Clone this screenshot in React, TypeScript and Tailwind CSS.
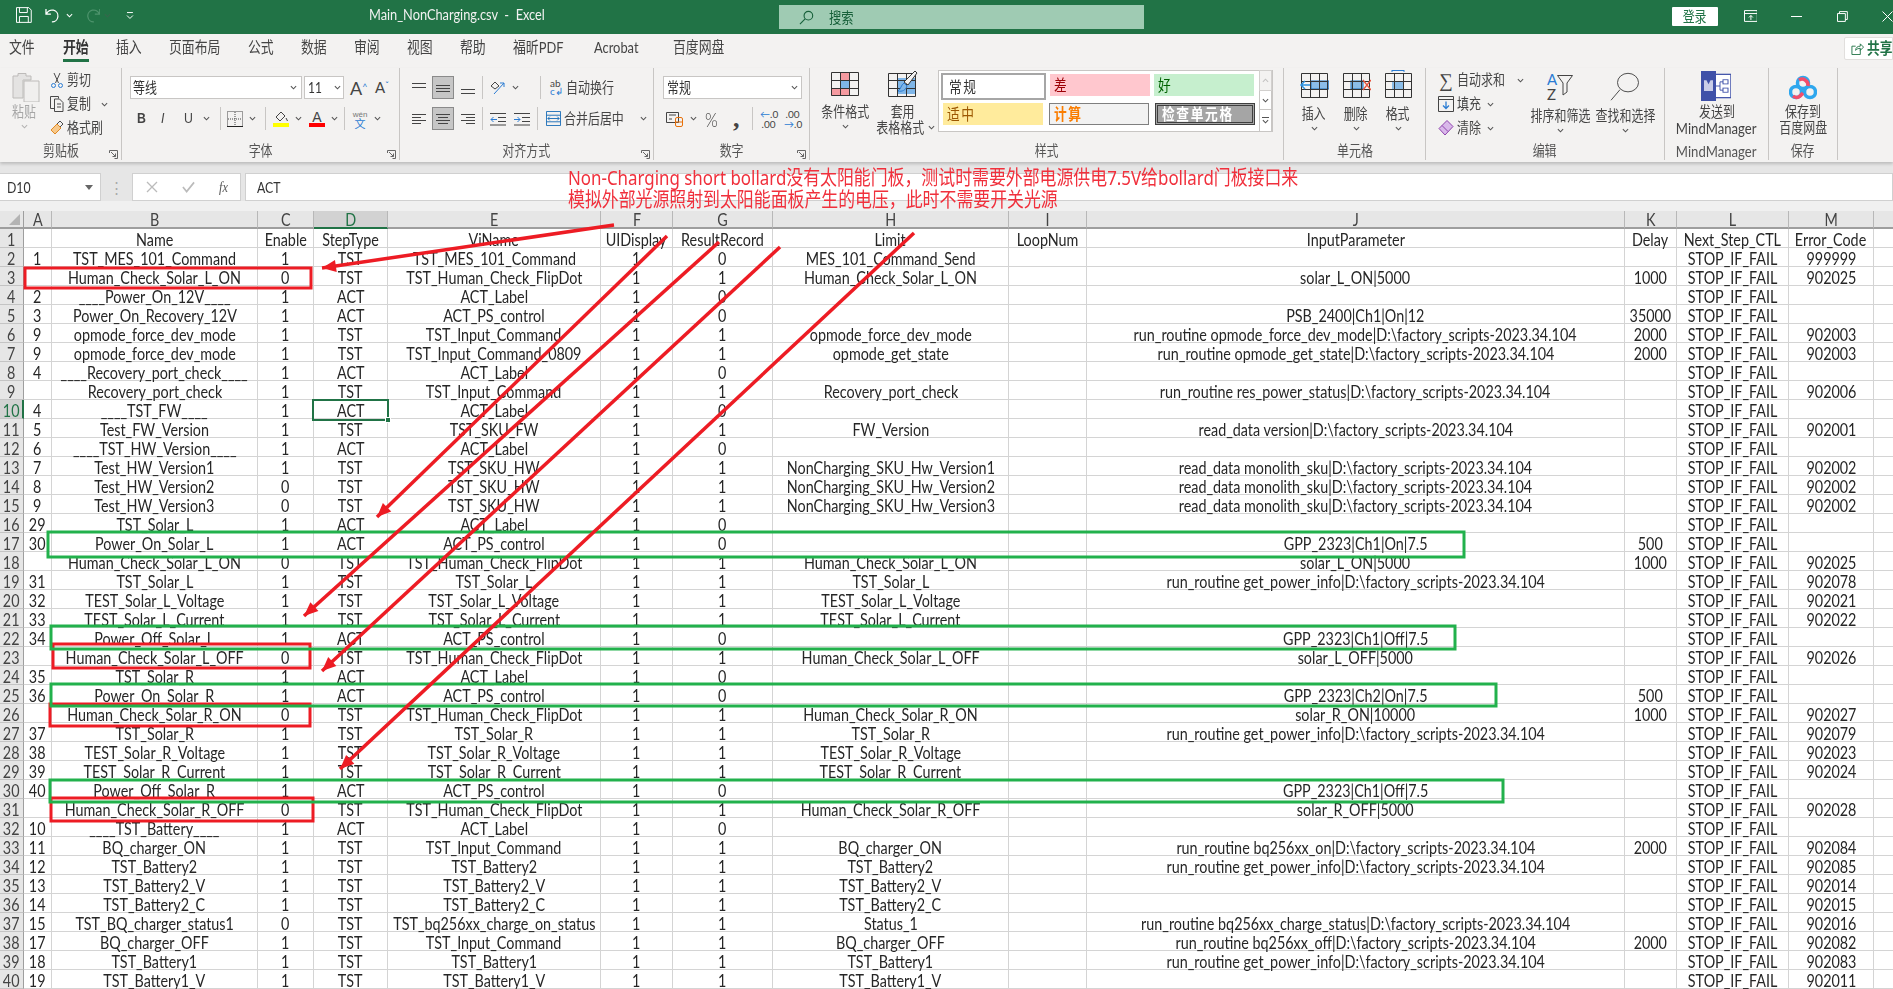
// App.tsx
import React from "react";

const COLS = "grid grid-cols-[24px_28px_206px_56px_74px_213px_72px_100px_236px_78px_538px_52px_112px_85px_19px]";
const STOP = "STOP_IF_FAIL";
const D = "|D:\\factory_scripts-2023.34.104";

// A..M of rows 2-40, "" where the cell is empty
const rows: string[][] = [
  ["1", "TST_MES_101_Command", "1", "TST", "TST_MES_101_Command", "1", "0", "MES_101_Command_Send", "", "", "", STOP, "999999"],
  ["", "Human_Check_Solar_L_ON", "0", "TST", "TST_Human_Check_FlipDot", "1", "1", "Human_Check_Solar_L_ON", "", "solar_L_ON|5000", "1000", STOP, "902025"],
  ["2", "____Power_On_12V____", "1", "ACT", "ACT_Label", "1", "0", "", "", "", "", STOP, ""],
  ["3", "Power_On_Recovery_12V", "1", "ACT", "ACT_PS_control", "1", "0", "", "", "PSB_2400|Ch1|On|12", "35000", STOP, ""],
  ["9", "opmode_force_dev_mode", "1", "TST", "TST_Input_Command", "1", "1", "opmode_force_dev_mode", "", "run_routine opmode_force_dev_mode" + D, "2000", STOP, "902003"],
  ["9", "opmode_force_dev_mode", "1", "TST", "TST_Input_Command_0809", "1", "1", "opmode_get_state", "", "run_routine opmode_get_state" + D, "2000", STOP, "902003"],
  ["4", "____Recovery_port_check____", "1", "ACT", "ACT_Label", "1", "0", "", "", "", "", STOP, ""],
  ["", "Recovery_port_check", "1", "TST", "TST_Input_Command", "1", "1", "Recovery_port_check", "", "run_routine res_power_status" + D, "", STOP, "902006"],
  ["4", "____TST_FW____", "1", "ACT", "ACT_Label", "1", "0", "", "", "", "", STOP, ""],
  ["5", "Test_FW_Version", "1", "TST", "TST_SKU_FW", "1", "1", "FW_Version", "", "read_data version" + D, "", STOP, "902001"],
  ["6", "____TST_HW_Version____", "1", "ACT", "ACT_Label", "1", "0", "", "", "", "", STOP, ""],
  ["7", "Test_HW_Version1", "1", "TST", "TST_SKU_HW", "1", "1", "NonCharging_SKU_Hw_Version1", "", "read_data monolith_sku" + D, "", STOP, "902002"],
  ["8", "Test_HW_Version2", "0", "TST", "TST_SKU_HW", "1", "1", "NonCharging_SKU_Hw_Version2", "", "read_data monolith_sku" + D, "", STOP, "902002"],
  ["9", "Test_HW_Version3", "0", "TST", "TST_SKU_HW", "1", "1", "NonCharging_SKU_Hw_Version3", "", "read_data monolith_sku" + D, "", STOP, "902002"],
  ["29", "TST_Solar_L", "1", "ACT", "ACT_Label", "1", "0", "", "", "", "", STOP, ""],
  ["30", "Power_On_Solar_L", "1", "ACT", "ACT_PS_control", "1", "0", "", "", "GPP_2323|Ch1|On|7.5", "500", STOP, ""],
  ["", "Human_Check_Solar_L_ON", "0", "TST", "TST_Human_Check_FlipDot", "1", "1", "Human_Check_Solar_L_ON", "", "solar_L_ON|5000", "1000", STOP, "902025"],
  ["31", "TST_Solar_L", "1", "TST", "TST_Solar_L", "1", "1", "TST_Solar_L", "", "run_routine get_power_info" + D, "", STOP, "902078"],
  ["32", "TEST_Solar_L_Voltage", "1", "TST", "TST_Solar_L_Voltage", "1", "1", "TEST_Solar_L_Voltage", "", "", "", STOP, "902021"],
  ["33", "TEST_Solar_L_Current", "1", "TST", "TST_Solar_L_Current", "1", "1", "TEST_Solar_L_Current", "", "", "", STOP, "902022"],
  ["34", "Power_Off_Solar_L", "1", "ACT", "ACT_PS_control", "1", "0", "", "", "GPP_2323|Ch1|Off|7.5", "", STOP, ""],
  ["", "Human_Check_Solar_L_OFF", "0", "TST", "TST_Human_Check_FlipDot", "1", "1", "Human_Check_Solar_L_OFF", "", "solar_L_OFF|5000", "", STOP, "902026"],
  ["35", "TST_Solar_R", "1", "ACT", "ACT_Label", "1", "0", "", "", "", "", STOP, ""],
  ["36", "Power_On_Solar_R", "1", "ACT", "ACT_PS_control", "1", "0", "", "", "GPP_2323|Ch2|On|7.5", "500", STOP, ""],
  ["", "Human_Check_Solar_R_ON", "0", "TST", "TST_Human_Check_FlipDot", "1", "1", "Human_Check_Solar_R_ON", "", "solar_R_ON|10000", "1000", STOP, "902027"],
  ["37", "TST_Solar_R", "1", "TST", "TST_Solar_R", "1", "1", "TST_Solar_R", "", "run_routine get_power_info" + D, "", STOP, "902079"],
  ["38", "TEST_Solar_R_Voltage", "1", "TST", "TST_Solar_R_Voltage", "1", "1", "TEST_Solar_R_Voltage", "", "", "", STOP, "902023"],
  ["39", "TEST_Solar_R_Current", "1", "TST", "TST_Solar_R_Current", "1", "1", "TEST_Solar_R_Current", "", "", "", STOP, "902024"],
  ["40", "Power_Off_Solar_R", "1", "ACT", "ACT_PS_control", "1", "0", "", "", "GPP_2323|Ch1|Off|7.5", "", STOP, ""],
  ["", "Human_Check_Solar_R_OFF", "0", "TST", "TST_Human_Check_FlipDot", "1", "1", "Human_Check_Solar_R_OFF", "", "solar_R_OFF|5000", "", STOP, "902028"],
  ["10", "____TST_Battery____", "1", "ACT", "ACT_Label", "1", "0", "", "", "", "", STOP, ""],
  ["11", "BQ_charger_ON", "1", "TST", "TST_Input_Command", "1", "1", "BQ_charger_ON", "", "run_routine bq256xx_on" + D, "2000", STOP, "902084"],
  ["12", "TST_Battery2", "1", "TST", "TST_Battery2", "1", "1", "TST_Battery2", "", "run_routine get_power_info" + D, "", STOP, "902085"],
  ["13", "TST_Battery2_V", "1", "TST", "TST_Battery2_V", "1", "1", "TST_Battery2_V", "", "", "", STOP, "902014"],
  ["14", "TST_Battery2_C", "1", "TST", "TST_Battery2_C", "1", "1", "TST_Battery2_C", "", "", "", STOP, "902015"],
  ["15", "TST_BQ_charger_status1", "0", "TST", "TST_bq256xx_charge_on_status", "1", "1", "Status_1", "", "run_routine bq256xx_charge_status" + D, "", STOP, "902016"],
  ["17", "BQ_charger_OFF", "1", "TST", "TST_Input_Command", "1", "1", "BQ_charger_OFF", "", "run_routine bq256xx_off" + D, "2000", STOP, "902082"],
  ["18", "TST_Battery1", "1", "TST", "TST_Battery1", "1", "1", "TST_Battery1", "", "run_routine get_power_info" + D, "", STOP, "902083"],
  ["19", "TST_Battery1_V", "1", "TST", "TST_Battery1_V", "1", "1", "TST_Battery1_V", "", "", "", STOP, "902011"],
];

const headRow = ["", "Name", "Enable", "StepType", "ViName", "UIDisplay", "ResultRecord", "Limit", "LoopNum", "InputParameter", "Delay", "Next_Step_CTL", "Error_Code"];

// the whole capture is squeezed sideways, so text is narrowed the same way
const T = ({ children, className = "" }: { children?: React.ReactNode; className?: string }) => (
  <span className={`inline-block whitespace-nowrap scale-x-[0.82] ${className}`}>{children}</span>
);
const L = ({ children, className = "" }: { children?: React.ReactNode; className?: string }) => (
  <T className={`origin-left ${className}`}>{children}</T>
);

const Chev = ({ className = "" }: { className?: string }) => (
  <svg viewBox="0 0 8 5" className={`w-[7px] h-[5px] shrink-0 ${className}`} fill="none" stroke="#555" strokeWidth="1.2">
    <path d="M1 1l3 3 3-3" />
  </svg>
);
const Sep = ({ className = "" }: { className?: string }) => <div className={`w-px h-[23px] bg-[#c8c6c4] shrink-0 ${className}`} />;

const Lines = ({ l }: { l: number[][] }) => (
  <svg viewBox="0 0 16 16" className="w-[16px] h-[16px] shrink-0" stroke="#444" strokeWidth="1" fill="none">
    {l.map((p, i) => (
      <path key={i} d={`M${p[0]} ${p[2]}.5H${p[1]}`} />
    ))}
  </svg>
);
const Pressed = ({ children, className = "" }: { children: React.ReactNode; className?: string }) => (
  <div className={`w-[22px] h-[23px] bg-[#c6c6c6] border border-[#8a8a8a] flex items-center justify-center shrink-0 ${className}`}>{children}</div>
);

const Group = ({ className, label, launcher, labelClass = "text-[14.6px]", children }: { className: string; label: string; launcher?: boolean; labelClass?: string; children: React.ReactNode }) => (
  <div className={`relative flex flex-col h-[92px] shrink-0 border-r border-[#c8c6c4] ${className}`}>
    <div className="h-[74px] flex flex-col">{children}</div>
    <div className={`h-[18px] mt-px flex items-center justify-center text-[#555] ${labelClass}`}>
      <T>{label}</T>
    </div>
    {launcher && (
      <svg viewBox="0 0 9 9" className="absolute right-[3px] bottom-[1px] w-[9px] h-[9px]" fill="none" stroke="#666" strokeWidth="1">
        <path d="M.5 3V.5H8.5V8.5H5.5M2 2l4.5 4.5M6.5 3.5v3h-3" />
      </svg>
    )}
  </div>
);

const Big = ({ className, lines, chev, children }: { className: string; lines: string[]; chev?: boolean; children: React.ReactNode }) => (
  <div className={`flex flex-col items-center shrink-0 ${className}`}>
    <div className="h-[30px] mb-[5px] flex items-end justify-center">{children}</div>
    {lines.map((s) => (
      <div key={s} className="h-[15px] mt-px leading-[15px] text-[14.6px] text-[#444] flex justify-center">
        <T>{s}</T>
      </div>
    ))}
    {chev && (
      <div className="h-[14px] flex items-center">
        <Chev />
      </div>
    )}
  </div>
);

const Grid3 = ({ cells, frame = "#333" }: { cells?: React.ReactNode; frame?: string }) => (
  <svg viewBox="0 0 28 24" className="w-[28px] h-[24px] mb-[2px]" fill="none">
    {cells}
    <path d="M.5.5h27v23H.5zM.5 8.5h27M.5 16.5h27M9.5.5v23M18.5.5v23" stroke={frame} strokeWidth="1" />
  </svg>
);

const StyleCell = ({ className, children }: { className: string; children: string }) => (
  <div className={`w-[100px] h-[22px] flex items-center pl-[4px] text-[15.5px] shrink-0 ${className}`}>
    <L>{children}</L>
  </div>
);

const tabs: [string, string][] = [
  ["文件", "ml-[9px]"],
  ["开始", "ml-[28px]"],
  ["插入", "ml-[27px]"],
  ["页面布局", "ml-[27px]"],
  ["公式", "ml-[27px]"],
  ["数据", "ml-[27px]"],
  ["审阅", "ml-[27px]"],
  ["视图", "ml-[27px]"],
  ["帮助", "ml-[27px]"],
  ["福昕PDF", "ml-[27px]"],
  ["Acrobat", "ml-[30px]"],
  ["百度网盘", "ml-[30px]"],
];
const tabWidths = ["w-[26px]", "w-[26px]", "w-[26px]", "w-[52px]", "w-[26px]", "w-[26px]", "w-[26px]", "w-[26px]", "w-[26px]", "w-[51px]", "w-[49px]", "w-[52px]"];

const TitleBar = () => (
  <div className="h-[34px] bg-[#217346] flex items-center text-white shrink-0 pb-[4px]">
    <svg viewBox="0 0 16 16" className="w-[16px] h-[16px] ml-[16px]" fill="none" stroke="#fff" strokeWidth="1">
      <path d="M.5.5h12.5l2.5 2.5v12.5H.5zM3.5.5v5h8v-5M3.5 15.5v-6h9v6" />
    </svg>
    <svg viewBox="0 0 16 16" className="w-[16px] h-[16px] ml-[13px]" fill="none" stroke="#fff" strokeWidth="1.3">
      <path d="M1 2v5h5M1.5 7A6 6 0 1 1 7 15" />
    </svg>
    <Chev className="ml-[5px] brightness-[4]" />
    <svg viewBox="0 0 16 16" className="w-[16px] h-[16px] ml-[12px] opacity-40" fill="none" stroke="#8fc3a5" strokeWidth="1.3">
      <path d="M15 2v5h-5M14.5 7A6 6 0 1 0 9 15" />
    </svg>
    <Chev className="ml-[4px] opacity-40" />
    <svg viewBox="0 0 8 9" className="w-[8px] h-[9px] ml-[15px]" fill="none" stroke="#fff">
      <path d="M1 1.5h6M1 4.5l3 3 3-3" />
    </svg>
    <div className="ml-[235px] w-[183px] text-[15.6px] font-[Lato,sans-serif] text-[#f2f2f2]">
      <L>Main_NonCharging.csv&nbsp; -&nbsp; Excel</L>
    </div>
    <div className="ml-[227px] mt-[4px] w-[371px] h-[24px] bg-[#9fcbb3] flex items-center text-[15px] text-[#17603a]">
      <svg viewBox="0 0 16 16" className="w-[15px] h-[15px] ml-[20px]" fill="none" stroke="#17603a" strokeWidth="1.2">
        <circle cx="10" cy="6" r="4.6" />
        <path d="M6.5 9.5L1 15" />
      </svg>
      <div className="ml-[15px]">
        <L>搜索</L>
      </div>
    </div>
    <div className="ml-[528px] mt-[3px] w-[46px] h-[19px] bg-white rounded-[1px] flex items-center justify-center text-[14.6px] text-[#217346]">
      <T>登录</T>
    </div>
    <svg viewBox="0 0 14 12" className="w-[14px] h-[12px] ml-[26px] mt-[2px]" fill="none" stroke="#fff">
      <path d="M.5.5h13v11H.5zM.5 3.5h13M7 10V5.5M5 7.5l2-2 2 2" />
    </svg>
    <div className="w-[11px] h-px bg-white ml-[34px] mt-[2px]" />
    <svg viewBox="0 0 11 11" className="w-[11px] h-[11px] ml-[35px] mt-[2px]" fill="none" stroke="#fff">
      <path d="M.5 2.5h8v8h-8zM2.5 2.5v-2h8v8h-2" />
    </svg>
    <svg viewBox="0 0 11 11" className="w-[11px] h-[11px] ml-[34px] mt-[2px] shrink-0" fill="none" stroke="#fff">
      <path d="M.5.5l10 10M10.5.5l-10 10" />
    </svg>
  </div>
);

const Tabs = () => (
  <div className="h-[34px] bg-[#f3f2f1] flex items-center relative shrink-0 text-[15.7px] text-[#444] pb-[6px]">
    {tabs.map(([t, ml], i) => (
      <div key={t} className={`relative h-full flex items-center shrink-0 ${ml} ${tabWidths[i]}`}>
        <L className={i === 1 ? "font-bold text-[#333]" : ""}>{t}</L>
        {i === 1 && <div className="absolute left-0 right-0 bottom-0 h-[3px] bg-[#217346]" />}
      </div>
    ))}
    <div className="absolute right-0 top-[3px] w-[49px] h-[23px] bg-white border border-[#e1dfdd] flex items-center pl-[6px] rounded-l-[2px]">
      <svg viewBox="0 0 14 14" className="w-[13px] h-[13px] shrink-0" fill="none" stroke="#217346">
        <path d="M10 8v5.5H1V4.5h4M5 9c0-3 2-4.500 5-4.500V2l3.500 3.500L10 9V6.800C8 6.800 6 7.500 5 9z" />
      </svg>
      <div className="ml-[3px] font-bold text-[#217346] text-[15.5px]">
        <L>共享</L>
      </div>
    </div>
  </div>
);

const Clipboard = () => (
  <Group className="w-[122px]" label="剪贴板" launcher>
    <div className="flex text-[14.6px] text-[#444]">
      <div className="w-[50px] shrink-0 pl-[12px] pt-[4px] flex flex-col">
        <svg viewBox="0 0 28 30" className="w-[28px] h-[30px]" fill="none">
          <path d="M1 4h5V1.500h8V4h5v4H11v18H1z" fill="#e4e3e2" stroke="#bdbbb9" />
          <path d="M12 9h15v21H12z" fill="#f0efee" stroke="#bdbbb9" />
        </svg>
        <div className="text-[#a6a6a6] mt-[2px] h-[16px] leading-[16px]">
          <L>粘贴</L>
        </div>
        <Chev className="ml-[9px] mt-[4px] opacity-40" />
      </div>
      <div className="flex flex-col">
        {[
          ["剪切", false],
          ["复制", true],
          ["格式刷", false],
        ].map(([s, c], i) => (
          <div key={String(s)} className="h-[24px] flex items-center">
            <svg viewBox="0 0 14 16" className="w-[14px] h-[16px] shrink-0" fill="none" stroke={i === 2 ? "#e08a25" : "#4a4a4a"}>
              {i === 0 && (
                <>
                  <path d="M4 1l4.500 10M10 1L5.500 11" />
                  <path d="M5.500 13.500a2 2 0 1 1-4 0 2 2 0 0 1 4 0zM12.500 13.500a2 2 0 1 1-4 0 2 2 0 0 1 4 0z" stroke="#2b7cd3" />
                </>
              )}
              {i === 1 && <path d="M4 12.500H.500V.500h8v2M4.500 3h5l3.500 3.500v9h-8.500zM7 8h4M7 11h4" />}
              {i === 2 && (
                <>
                  <path d="M1 10l6-6 4 4-6 6z" fill="#f7c98b" />
                  <path d="M7 4l3-3 3 3-3 3" stroke="#4a4a4a" />
                </>
              )}
            </svg>
            <div className="ml-[3px] w-[24px]">
              <L>{s as string}</L>
            </div>
            {c && <Chev className="ml-[10px]" />}
          </div>
        ))}
      </div>
    </div>
  </Group>
);

const FontGroup = () => (
  <Group className="w-[278px]" label="字体" launcher>
    <div className="flex items-center mt-[8px] h-[23px] text-[14.6px] text-[#333]">
      <div className="ml-[8px] w-[172px] h-[23px] bg-white border border-[#c8c6c4] flex items-center pl-[2px] shrink-0">
        <L className="flex-1">等线</L>
        <Chev className="mr-[4px]" />
      </div>
      <div className="ml-[2px] w-[40px] h-[23px] bg-white border border-[#c8c6c4] flex items-center pl-[3px] shrink-0 font-[Lato,sans-serif]">
        <L className="flex-1">11</L>
        <Chev className="mr-[2px]" />
      </div>
      <div className="ml-[6px] w-[17px] text-[18px] font-[Lato,sans-serif] leading-none text-[#444]">A<sup className="text-[9px] text-[#2b7cd3]">^</sup></div>
      <div className="ml-[8px] w-[17px] text-[15px] font-[Lato,sans-serif] leading-none text-[#444]">A<sup className="text-[9px] text-[#2b7cd3]">ˇ</sup></div>
    </div>
    <div className="flex items-center mt-[8px] h-[23px] text-[#444] font-['Liberation_Sans',sans-serif]">
      <div className="ml-[15px] w-[10px] text-[15px] font-bold">
        <L>B</L>
      </div>
      <div className="ml-[14px] w-[8px] text-[15px] italic">
        <L>I</L>
      </div>
      <div className="ml-[15px] w-[10px] text-[15px] underline">
        <L>U</L>
      </div>
      <Chev className="ml-[9px]" />
      <Sep className="ml-[10px]" />
      <svg viewBox="0 0 16 16" className="w-[16px] h-[16px] ml-[6px]" fill="none" stroke="#444">
        <path d="M.5.5h15v15H.5z" strokeDasharray="1 1" />
        <path d="M8 1v14M1 8h14" strokeDasharray="1 1" />
        <path d="M0 15.500h16" stroke="#222" />
      </svg>
      <Chev className="ml-[6px]" />
      <Sep className="ml-[9px]" />
      <div className="ml-[7px] w-[16px] flex flex-col items-center">
        <svg viewBox="0 0 16 12" className="w-[16px] h-[12px]" fill="none" stroke="#444">
          <path d="M3 6l5-5 4 4-5 5zM13 7l1.500 3" />
        </svg>
        <div className="w-[16px] h-[4px] bg-[#ffff00]" />
      </div>
      <Chev className="ml-[6px]" />
      <div className="ml-[7px] w-[16px] flex flex-col items-center text-[14px] leading-[12px]">
        A
        <div className="w-[16px] h-[4px] bg-[#ff0000]" />
      </div>
      <Chev className="ml-[6px]" />
      <Sep className="ml-[6px]" />
      <div className="ml-[8px] w-[14px] flex flex-col items-center leading-[9px]">
        <span className="text-[8px] text-[#777]">wén</span>
        <span className="text-[11px] text-[#2b7cd3] font-[Noto_Sans_CJK_SC]">文</span>
      </div>
      <Chev className="ml-[7px]" />
    </div>
  </Group>
);

const AlignGroup = () => (
  <Group className="w-[254px]" label="对齐方式" launcher>
    <div className="flex items-center mt-[8px] h-[23px] text-[14.6px] text-[#444]">
      <div className="ml-[11px]">
        <Lines l={[[1, 15, 3], [1, 15, 7]]} />
      </div>
      <Pressed className="ml-[5px]">
        <Lines l={[[1, 15, 5], [1, 15, 8], [1, 15, 11]]} />
      </Pressed>
      <div className="ml-[6px]">
        <Lines l={[[1, 15, 9], [1, 15, 13]]} />
      </div>
      <Sep className="ml-[6px]" />
      <svg viewBox="0 0 16 16" className="w-[16px] h-[16px] ml-[7px]" fill="none" stroke="#444">
        <path d="M1 6l4-4 4 4-4 3z" />
        <path d="M4 14L14 3M10 3h4v4" stroke="#2b7cd3" />
      </svg>
      <Chev className="ml-[6px]" />
      <Sep className="ml-[21px]" />
      <div className="ml-[9px] w-[14px] h-[18px] text-[10px] leading-[8px] font-[Lato,sans-serif]">
        ab
        <br />
        <span className="text-[#2b7cd3]">c↲</span>
      </div>
      <div className="ml-[2px] w-[50px]">
        <L>自动换行</L>
      </div>
    </div>
    <div className="flex items-center mt-[8px] h-[23px] text-[14.6px] text-[#444]">
      <div className="ml-[11px]">
        <Lines l={[[1, 15, 3], [1, 10, 6], [1, 15, 9], [1, 10, 12]]} />
      </div>
      <Pressed className="ml-[5px]">
        <Lines l={[[1, 15, 3], [3, 13, 6], [1, 15, 9], [3, 13, 12]]} />
      </Pressed>
      <div className="ml-[6px]">
        <Lines l={[[1, 15, 3], [6, 15, 6], [1, 15, 9], [6, 15, 12]]} />
      </div>
      <Sep className="ml-[6px]" />
      <svg viewBox="0 0 16 14" className="w-[16px] h-[14px] ml-[7px]" fill="none" stroke="#444">
        <path d="M0 1.500h16M8 5.500h8M8 9.500h8M0 13h16" />
        <path d="M7 7.500H1M3.500 5l-2.500 2.500 2.500 2.500" stroke="#2b7cd3" />
      </svg>
      <svg viewBox="0 0 16 14" className="w-[16px] h-[14px] ml-[8px]" fill="none" stroke="#444">
        <path d="M0 1.500h16M8 5.500h8M8 9.500h8M0 13h16" />
        <path d="M0 7.500h6M3.500 5l2.500 2.500-2.500 2.500" stroke="#2b7cd3" />
      </svg>
      <Sep className="ml-[7px]" />
      <svg viewBox="0 0 16 16" className="w-[15px] h-[15px] ml-[8px]" fill="none" stroke="#1d6fb8">
        <path d="M.5.5h15v15H.5zM.5 4.500h15M.5 11.500h15M2 8h12M4 6L2 8l2 2M12 6l2 2-2 2" />
      </svg>
      <div className="ml-[3px] w-[64px]">
        <L>合并后居中</L>
      </div>
      <Chev className="ml-[12px]" />
    </div>
  </Group>
);

const NumberGroup = () => (
  <Group className="w-[156px]" label="数字" launcher>
    <div className="flex items-center mt-[8px] h-[23px] text-[14.6px] text-[#333]">
      <div className="ml-[9px] w-[139px] h-[23px] bg-white border border-[#c8c6c4] flex items-center pl-[3px]">
        <L className="flex-1">常规</L>
        <Chev className="mr-[3px]" />
      </div>
    </div>
    <div className="flex items-center mt-[8px] h-[23px] text-[#444]">
      <svg viewBox="0 0 18 16" className="w-[18px] h-[16px] ml-[12px]" fill="none" stroke="#444">
        <path d="M.5 1.500h12v10H.5zM3 4h7M3 8h3" />
        <rect x="9.500" y="6.500" width="7" height="9" rx="1.500" stroke="#e8710a" />
        <path d="M9.500 11h7" stroke="#e8710a" />
      </svg>
      <Chev className="ml-[6px]" />
      <div className="ml-[8px] w-[16px] text-[20px] font-[Lato,sans-serif] font-light">
        <L>%</L>
      </div>
      <div className="ml-[12px] w-[10px] text-[26px] leading-[14px] font-bold font-['Liberation_Serif',serif]">,</div>
      <Sep className="ml-[9px]" />
      <div className="ml-[7px] w-[17px] text-[10px] leading-[10px] font-[Lato,sans-serif] text-center">
        <span className="text-[#2b7cd3]">←</span>.0
        <br />
        .00
      </div>
      <div className="ml-[7px] w-[17px] text-[10px] leading-[10px] font-[Lato,sans-serif] text-center">
        .00
        <br />
        <span className="text-[#2b7cd3]">→</span>.0
      </div>
    </div>
  </Group>
);

const StylesGroup = () => (
  <Group className="w-[474px]" label="样式">
    <div className="flex">
      <Big className="w-[68px] ml-[1px]" lines={["条件格式"]} chev>
        <Grid3
          cells={
            <>
              <rect x="9" y="0" width="10" height="8" fill="#f59aa0" />
              <rect x="9" y="8" width="9" height="8" fill="#7fb6e8" />
              <rect x="0" y="16" width="19" height="8" fill="#f59aa0" />
            </>
          }
        />
      </Big>
      <div className="w-[52px] flex flex-col items-center shrink-0 ml-[-2px]">
        <div className="h-[30px] mb-[5px] flex items-end">
          <svg viewBox="0 0 30 28" className="w-[30px] h-[28px]" fill="none">
            <rect x="9" y="8" width="19" height="16" fill="#7fb6e8" />
            <path d="M.5 3.500h27v23H.5zM.5 10.500h27M.5 18.500h27M9.500 3.500v23M18.500 3.500v23" stroke="#333" />
            <path d="M27 1l2 2-9 12-4-3z" fill="#f3f2f1" stroke="#333" />
            <path d="M16 13l3 3c-1 4-5 6-9 5 3-2 3-6 6-8z" fill="#7fb6e8" stroke="#2b7cd3" />
          </svg>
        </div>
        <div className="h-[15px] mt-px leading-[15px] text-[14.6px] text-[#444] flex justify-center">
          <T>套用</T>
        </div>
        <div className="h-[15px] mt-[1px] leading-[15px] text-[14.6px] text-[#444] flex justify-center items-center">
          <T className="shrink-0">表格格式</T>
          <Chev className="ml-[-2px] shrink-0" />
        </div>
      </div>
      <div className="ml-[9px] mt-[2px] w-[335px] h-[62px] bg-white border border-[#c8c6c4] flex shrink-0">
        <div className="flex flex-col w-[320px] pl-[2px] pt-[3px] gap-[6px] font-[Noto_Sans_CJK_SC]">
          <div className="flex gap-[4px]">
            <div className="w-[105px] h-[27px] -mt-[1px] border-2 border-[#a6a6a6] bg-white flex items-center pl-[6px] text-[15.5px] text-[#333] shrink-0 outline-1 outline-white">
              <L className="tracking-[2px]">常规</L>
            </div>
            <StyleCell className="bg-[#ffc7ce] text-[#9c0006]">差</StyleCell>
            <StyleCell className="bg-[#c6efce] text-[#006100]">好</StyleCell>
          </div>
          <div className="flex gap-[6px] pl-[2px] -mt-[3px]">
            <StyleCell className="bg-[#ffeb9c] text-[#9c5700] tracking-[2px]">适中</StyleCell>
            <StyleCell className="bg-[#f2f2f2] border border-[#7f7f7f] text-[#fa7d00] font-bold tracking-[2px]">计算</StyleCell>
            <StyleCell className="bg-[#a5a5a5] border-[3px] border-double border-[#3f3f3f] text-white font-bold tracking-[2px]">检查单元格</StyleCell>
          </div>
        </div>
        <div className="w-[13px] flex flex-col -my-px">
          <div className="h-[21px] border border-[#d2d0ce] bg-[#f3f2f1] flex items-center justify-center">
            <Chev className="rotate-180 opacity-30" />
          </div>
          <div className="h-[20px] border border-[#c8c6c4] border-t-0 flex items-center justify-center">
            <Chev />
          </div>
          <div className="h-[22px] border border-[#c8c6c4] border-t-0 flex flex-col items-center justify-center gap-[1px]">
            <div className="w-[7px] h-px bg-[#555]" />
            <Chev />
          </div>
        </div>
      </div>
    </div>
  </Group>
);

const CellIcon = ({ kind }: { kind: number }) => (
  <svg viewBox="0 0 30 30" className="w-[30px] h-[30px]" fill="none">
    {kind === 0 && <rect x="12" y="11" width="18" height="8" fill="#8bbde8" stroke="#1d6fb8" />}
    {kind === 1 && <rect x="10" y="11" width="12" height="8" fill="#8bbde8" stroke="#1d6fb8" />}
    {kind === 2 && <rect x="9" y="11" width="12" height="8" fill="#8bbde8" />}
    <path d="M2.500 3.500h26v24h-26zM2.500 11.500h26M2.500 19.500h26M11.500 3.500v24M20.500 3.500v24" stroke="#333" />
    {kind === 0 && <path d="M11 15H2M6 11l-4 4 4 4" stroke="#2b8fdc" strokeWidth="1.500" fill="#fff" />}
    {kind === 1 && <path d="M22 10l8 10M30 10l-8 10" stroke="#e8563f" strokeWidth="1.300" />}
    {kind === 2 && <path d="M9 .5h12M9 0v2M21 0v2" stroke="#2b7cd3" />}
  </svg>
);

const CellsGroup = () => (
  <Group className="w-[142px]" label="单元格">
    <div className="flex pt-[2px]">
      <Big className="w-[42px] ml-[9px]" lines={["插入"]} chev>
        <CellIcon kind={0} />
      </Big>
      <Big className="w-[42px]" lines={["删除"]} chev>
        <CellIcon kind={1} />
      </Big>
      <Big className="w-[42px]" lines={["格式"]} chev>
        <CellIcon kind={2} />
      </Big>
    </div>
  </Group>
);

const EditGroup = () => (
  <Group className="w-[239px]" label="编辑">
    <div className="flex text-[14.6px] text-[#444]">
      <div className="flex flex-col w-[108px] shrink-0 pl-[12px]">
        <div className="h-[24px] flex items-center">
          <div className="w-[16px] text-[19px] leading-none font-['Liberation_Serif',serif] font-light text-center">∑</div>
          <div className="ml-[3px] w-[48px]">
            <L>自动求和</L>
          </div>
          <Chev className="ml-[12px]" />
        </div>
        <div className="h-[24px] flex items-center">
          <svg viewBox="0 0 16 16" className="w-[16px] h-[16px]" fill="none" stroke="#444">
            <path d="M.5.5h15v15H.5zM.5 3.500h15" />
            <path d="M8 5.500v7M5 9.500l3 3 3-3" stroke="#2b7cd3" strokeWidth="1.300" />
          </svg>
          <div className="ml-[3px] w-[24px]">
            <L>填充</L>
          </div>
          <Chev className="ml-[6px]" />
        </div>
        <div className="h-[24px] flex items-center">
          <svg viewBox="0 0 16 16" className="w-[16px] h-[16px]" fill="none" stroke="#8e44ad">
            <path d="M1 8.500L9 .500l6 6-8 8.500z" fill="#d9b8ea" />
            <path d="M4 5.500l6 6" />
          </svg>
          <div className="ml-[3px] w-[24px]">
            <L>清除</L>
          </div>
          <Chev className="ml-[6px]" />
        </div>
      </div>
      <Big className="w-[62px] ml-[-5px] pt-[4px]" lines={["排序和筛选"]} chev>
        <div className="flex items-end h-[30px] -mt-[2px]">
          <div className="flex flex-col text-[15px] leading-[15px] font-[Lato,sans-serif]">
            <span className="text-[#2b7cd3]">A</span>
            <span>Z</span>
          </div>
          <svg viewBox="0 0 16 22" className="w-[16px] h-[22px] mb-[6px]" fill="none" stroke="#444">
            <path d="M.5 1.500h15L10 9v9l-4 3V9z" />
          </svg>
        </div>
      </Big>
      <Big className="w-[62px] ml-[3px] pt-[4px]" lines={["查找和选择"]} chev>
        <svg viewBox="0 0 30 34" className="w-[30px] h-[30px]" fill="none" stroke="#444" preserveAspectRatio="none">
          <circle cx="18" cy="12" r="10.500" />
          <path d="M10 20L1 32" />
        </svg>
      </Big>
    </div>
  </Group>
);

const MindGroup = () => (
  <Group className="w-[104px]" label="MindManager" labelClass="text-[16px]">
    <div className="flex justify-center pt-[3px] font-[Lato,'Noto_Sans_CJK_SC',sans-serif]">
      <div className="flex flex-col items-center">
        <svg viewBox="0 0 30 36" className="w-[30px] h-[30px]" preserveAspectRatio="none">
          <rect x="14" y="4" width="16" height="28" fill="#fff" stroke="#3f51a8" strokeWidth="1.500" />
          <rect x="0" y="0" width="15" height="36" fill="#3f51a8" />
          <path d="M3 11h2.500L7.500 16 9.500 11H12v13H3z" fill="#c9cde8" />
          <path d="M15 18h4M19 13v10M19 13h3M19 23h3" stroke="#3f51a8" fill="none" />
          <rect x="22" y="10.500" width="5" height="5" fill="none" stroke="#3f51a8" />
          <rect x="22" y="20.500" width="5" height="5" fill="none" stroke="#3f51a8" />
        </svg>
        <div className="h-[15px] leading-[15px] text-[14.6px] text-[#444] mt-[3px]">
          <T>发送到</T>
        </div>
        <div className="h-[15px] leading-[15px] text-[16px] text-[#444] mt-[1px]">
          <T>MindManager</T>
        </div>
      </div>
    </div>
  </Group>
);

const SaveGroup = () => (
  <Group className="w-[69px]" label="保存">
    <div className="flex flex-col items-center pt-[1px]">
      <svg viewBox="0 0 28 26" className="w-[28px] h-[26px] mt-[6px] mb-[3px]" fill="none" strokeWidth="3.500">
        <circle cx="14" cy="8" r="5.500" stroke="#2ea7ee" />
        <circle cx="7" cy="17" r="5.500" stroke="#2ea7ee" />
        <circle cx="21" cy="17" r="5.500" stroke="#2ea7ee" />
        <path d="M10 5a6 6 0 0 1 9 6" stroke="#f24e6b" />
        <path d="M4 21c5 4 8-1 10-3" stroke="#f24e6b" />
      </svg>
      <div className="h-[15px] leading-[15px] text-[14.6px] text-[#444]">
        <T>保存到</T>
      </div>
      <div className="h-[15px] leading-[15px] text-[14.6px] text-[#444] mt-[1px]">
        <T>百度网盘</T>
      </div>
    </div>
  </Group>
);

const FormulaBar = () => (
  <div className="h-[39px] bg-[#e6e6e6] pt-[11px] shrink-0 flex flex-col">
    <div className="h-[28px] flex items-stretch text-[15px] font-[Lato,sans-serif] text-[#333]">
      <div className="w-[101px] bg-white border-y border-r border-[#d0d0d0] flex items-center pl-[7px] shrink-0">
        <L className="flex-1">D10</L>
        <div className="w-0 h-0 border-x-[4px] border-x-transparent border-t-[5px] border-t-[#666] mr-[7px]" />
      </div>
      <div className="w-[31px] flex items-center justify-center text-[#aaa]">⋮</div>
      <div className="w-[109px] bg-white border border-[#d0d0d0] flex items-center shrink-0">
        <svg viewBox="0 0 12 12" className="w-[12px] h-[12px] ml-[13px]" fill="none" stroke="#bbb" strokeWidth="1.300">
          <path d="M1 1l10 10M11 1L1 11" />
        </svg>
        <svg viewBox="0 0 14 12" className="w-[13px] h-[12px] ml-[24px]" fill="none" stroke="#bbb" strokeWidth="1.800">
          <path d="M1 6l4 5 8-10" />
        </svg>
        <div className="ml-[24px] italic text-[15px] font-['Liberation_Serif',serif] text-[#555]">
          <L>fx</L>
        </div>
      </div>
      <div className="flex-1 ml-[4px] bg-white border border-[#d0d0d0] flex items-center pl-[11px]">
        <L>ACT</L>
      </div>
    </div>
  </div>
);

const HeadCell = ({ children, active, className = "" }: { children?: React.ReactNode; active?: boolean; className?: string }) => (
  <div className={`flex items-center justify-center h-[18px] pt-px border-r border-[#b8b8b8] border-b-2 ${active ? "bg-[#d2d2d2] border-b-[#217346] text-[#217346]" : "bg-[#e6e6e6] border-b-[#9e9e9e]"} ${className}`}>
    <T>{children}</T>
  </div>
);

const Cell = ({ children }: { children?: React.ReactNode }) => (
  <div className="flex items-center justify-center h-[19px] pt-[2px] border-r border-b border-[#d4d4d4] bg-white">
    <T>{children}</T>
  </div>
);

const RowNo = ({ n }: { n: number }) => (
  <div className={`flex items-center justify-center h-[19px] pt-[2px] border-b border-[#c4c4c4] ${n === 10 ? "bg-[#d2d2d2] text-[#217346] border-r-2 border-r-[#217346]" : "bg-[#e6e6e6] text-[#444] border-r border-r-[#9e9e9e]"}`}>
    <T>{n}</T>
  </div>
);

const Sheet = () => (
  <div className="flex flex-col font-[Lato,'Noto_Sans_CJK_SC',sans-serif] text-[17.5px] text-[#262626] leading-[19px] overflow-hidden">
    <div className="h-[10px] bg-[#f0f0f0]" />
    <div className={`${COLS} text-[#444]`}>
      <div className="h-[18px] bg-[#e6e6e6] border-r border-[#9e9e9e] border-b-2 border-b-[#9e9e9e] flex items-end justify-end pr-[3px] pb-[2px]">
        <div className="w-0 h-0 border-l-[11px] border-l-transparent border-b-[11px] border-b-[#b4b4b4]" />
      </div>
      {"ABCDEFGHIJKLM".split("").map((c) => (
        <HeadCell key={c} active={c === "D"}>
          {c}
        </HeadCell>
      ))}
      <div className="h-[18px] bg-[#e6e6e6] border-b-2 border-b-[#9e9e9e]" />
    </div>
    <div className={COLS}>
      {[headRow, ...rows].map((r, i) => (
        <React.Fragment key={i}>
          <RowNo n={i + 1} />
          {r.map((v, j) => (
            <Cell key={j}>{v}</Cell>
          ))}
          <div className="h-[19px] border-b border-[#d4d4d4] bg-white" />
        </React.Fragment>
      ))}
    </div>
  </div>
);

// red arrows drawn over the sheet, tip last
const arrows = [
  [614, 225, 322, 268],
  [667, 236, 377, 517],
  [719, 242, 304, 616],
  [780, 247, 322, 671],
  [914, 233, 340, 769],
];

const head = ([x1, y1, x2, y2]: number[]) => {
  const len = Math.hypot(x2 - x1, y2 - y1);
  const ux = (x2 - x1) / len;
  const uy = (y2 - y1) / len;
  const bx = x2 - ux * 14;
  const by = y2 - uy * 14;
  return `${x2},${y2} ${bx - uy * 6},${by + ux * 6} ${bx + uy * 6},${by - ux * 6}`;
};

const Markup = () => (
  <svg viewBox="0 0 1893 989" className="absolute left-0 top-0 w-[1893px] h-[989px] pointer-events-none" fill="none">
    {[
      [50, 704, 260, 22],
      [53, 644, 257, 24],
      [25, 268, 286, 20],
      [51, 798, 262, 23],
    ].map(([x, y, w, h]) => (
      <rect key={y} x={x} y={y} width={w} height={h} stroke="#ed1c24" strokeWidth="3" />
    ))}
    {[
      [48, 532, 1416, 25],
      [51, 626, 1404, 23],
      [51, 684, 1445, 22],
      [50, 780, 1453, 22],
    ].map(([x, y, w, h]) => (
      <rect key={y} x={x} y={y} width={w} height={h} stroke="#22b14c" strokeWidth="3" />
    ))}
    {arrows.map((a) => (
      <g key={a[0]}>
        <line x1={a[0]} y1={a[1]} x2={a[2]} y2={a[3]} stroke="#ed1c24" strokeWidth="3.5" />
        <polygon points={head(a)} fill="#ed1c24" />
      </g>
    ))}
  </svg>
);

const App: React.FC = () => {
  return (
    <div className="relative w-[1893px] h-[989px] overflow-hidden bg-white font-[Lato,'Noto_Sans_CJK_SC',sans-serif]">
      <TitleBar />
      <Tabs />
      <div className="h-[94px] bg-[#f3f2f1] flex pt-0 shadow-[0_2px_3px_rgba(0,0,0,0.18)] relative z-10">
        <Clipboard />
        <FontGroup />
        <AlignGroup />
        <NumberGroup />
        <StylesGroup />
        <CellsGroup />
        <EditGroup />
        <MindGroup />
        <SaveGroup />
      </div>
      <FormulaBar />
      <Sheet />
      {/* selected cell D10 */}
      <div className="absolute left-[312px] top-[399px] w-[77px] h-[22px] border-2 border-[#217346]">
        <div className="absolute right-[-4px] bottom-[-4px] w-[6px] h-[6px] bg-[#217346] border border-white" />
      </div>
      <Markup />
      <div className="absolute left-[568px] top-[166px] text-[20.6px] leading-[22px] text-[#f0303c] font-['Noto_Sans','Noto_Sans_CJK_SC',sans-serif]">
        <div>
          <L>Non-Charging short bollard没有太阳能门板，测试时需要外部电源供电7.5V给bollard门板接口来</L>
        </div>
        <div>
          <L>模拟外部光源照射到太阳能面板产生的电压，此时不需要开关光源</L>
        </div>
      </div>
    </div>
  );
};

export default App;
